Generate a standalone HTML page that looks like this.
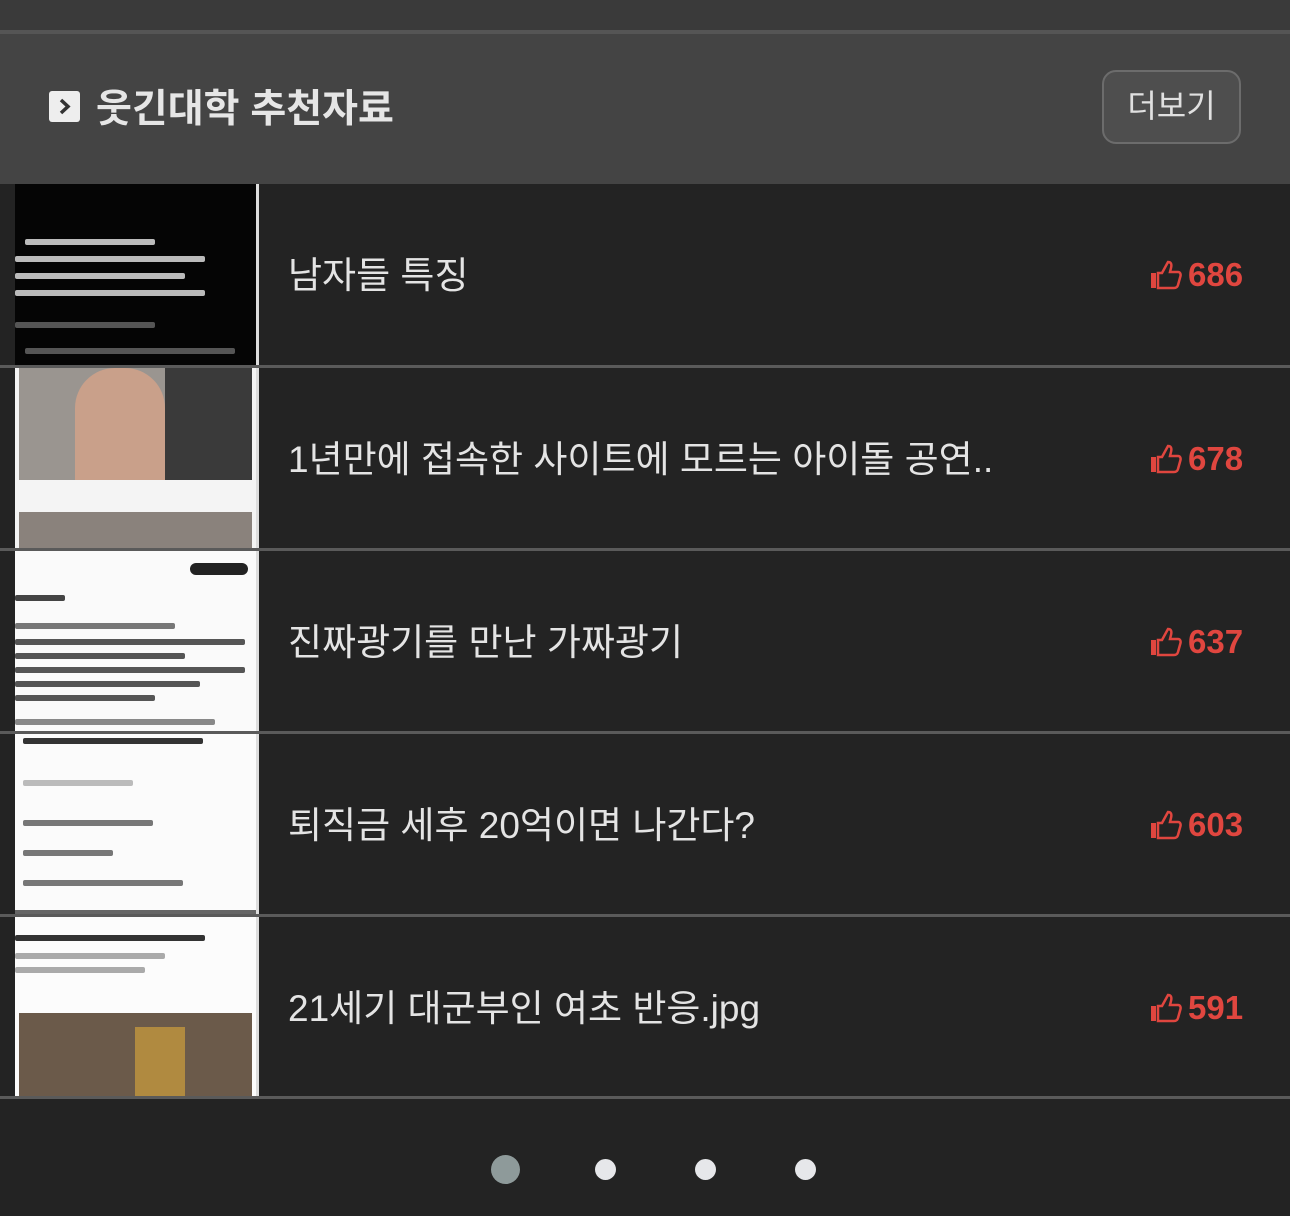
<!DOCTYPE html>
<html><head><meta charset="utf-8"><style>
*{margin:0;padding:0;box-sizing:border-box}
body{width:1290px;height:1216px;background:#232323;font-family:"Liberation Sans","Noto Sans CJK KR",sans-serif;position:relative;overflow:hidden}
.top{position:absolute;left:0;top:0;width:1290px;height:30px;background:#3a3a3a}
.tl{position:absolute;left:0;top:30px;width:1290px;height:4px;background:#555}
.hdr{position:absolute;left:0;top:34px;width:1290px;height:150px;background:#444}
.hdr .ic{position:absolute;left:49px;top:57px;width:31px;height:31px;background:#eee;border-radius:3px}
.hdr h1{position:absolute;left:96px;top:44px;font-size:39px;font-weight:bold;color:#e6e6e6;white-space:nowrap}
.btn{position:absolute;left:1102px;top:36px;width:139px;height:74px;border:2px solid #6c6c6c;border-radius:14px;background:#4e4e4e;color:#e0e0e0;font-size:32px;text-align:center;line-height:68px}
.row{position:absolute;left:0;width:1290px;height:181px;background:#232323}
.sep{position:absolute;left:0;width:1290px;height:3px;background:#5a5a5a}
.th{position:absolute;left:15px;top:0;width:241px;height:181px;overflow:hidden}
.edge{position:absolute;left:256px;top:0;width:3px;height:181px;background:#ddd}
.t{position:absolute;left:288px;top:61px;font-size:37px;color:#e4e4e4;white-space:nowrap}
.v{position:absolute;left:1150px;top:72px;font-size:33px;font-weight:bold;color:#e0463f}
.v svg{vertical-align:-4px;margin-right:6px}
.dot{position:absolute;border-radius:50%}
.ln{position:absolute;height:6px;background:#888;border-radius:2px}
</style></head><body>
<div class="top"></div><div class="tl"></div>
<div class="hdr">
<div class="ic"><svg width="31" height="31" viewBox="0 0 31 31"><path d="M12 9l7 6.5-7 6.5" stroke="#333" stroke-width="3.5" fill="none"/></svg></div>
<h1>웃긴대학 추천자료</h1>
<div class="btn">더보기</div>
</div>

<div class="row" style="top:184px"><div class="th" style="background:#050505">
<div class="ln" style="left:10px;top:55px;width:130px;background:#bbb"></div>
<div class="ln" style="left:0;top:72px;width:190px;background:#bbb"></div>
<div class="ln" style="left:0;top:89px;width:170px;background:#bbb"></div>
<div class="ln" style="left:0;top:106px;width:190px;background:#bbb"></div>
<div class="ln" style="left:0;top:138px;width:140px;background:#555"></div>
<div class="ln" style="left:10px;top:164px;width:210px;background:#555"></div>
</div><div class="edge"></div><div class="t">남자들 특징</div><div class="v"><svg width="32" height="30" viewBox="0 0 32 30"><rect x="1" y="13" width="5" height="15" fill="#e0463f"/><path d="M8 13h4l6-11c3 0 4 2 3 6l-1 4h8c2 0 3 2 2.5 4l-2.5 9c-.5 2-2 3-4 3H8z" fill="none" stroke="#e0463f" stroke-width="2.5"/></svg>686</div></div>
<div class="sep" style="top:365px"></div>

<div class="row" style="top:368px"><div class="th" style="background:#f4f4f4">
<div style="position:absolute;left:4px;top:0;width:233px;height:112px;background:#9a9590"></div>
<div style="position:absolute;left:60px;top:0;width:90px;height:112px;background:#c9a08a;border-radius:40px 40px 0 0"></div>
<div style="position:absolute;left:150px;top:0;width:87px;height:112px;background:#3a3a3a"></div>
<div style="position:absolute;left:4px;top:144px;width:233px;height:40px;background:#8a827c"></div>
</div><div class="edge"></div><div class="t">1년만에 접속한 사이트에 모르는 아이돌 공연..</div><div class="v"><svg width="32" height="30" viewBox="0 0 32 30"><rect x="1" y="13" width="5" height="15" fill="#e0463f"/><path d="M8 13h4l6-11c3 0 4 2 3 6l-1 4h8c2 0 3 2 2.5 4l-2.5 9c-.5 2-2 3-4 3H8z" fill="none" stroke="#e0463f" stroke-width="2.5"/></svg>678</div></div>
<div class="sep" style="top:548px"></div>

<div class="row" style="top:551px"><div class="th" style="background:#fafafa">
<div class="ln" style="left:175px;top:12px;width:58px;height:12px;background:#222;border-radius:6px"></div>
<div class="ln" style="left:0;top:44px;width:50px;background:#444"></div>
<div class="ln" style="left:0;top:72px;width:160px;background:#777"></div>
<div class="ln" style="left:0;top:88px;width:230px;background:#555"></div>
<div class="ln" style="left:0;top:102px;width:170px;background:#555"></div>
<div class="ln" style="left:0;top:116px;width:230px;background:#555"></div>
<div class="ln" style="left:0;top:130px;width:185px;background:#555"></div>
<div class="ln" style="left:0;top:144px;width:140px;background:#555"></div>
<div class="ln" style="left:0;top:168px;width:200px;background:#888"></div>
</div><div class="edge"></div><div class="t">진짜광기를 만난 가짜광기</div><div class="v"><svg width="32" height="30" viewBox="0 0 32 30"><rect x="1" y="13" width="5" height="15" fill="#e0463f"/><path d="M8 13h4l6-11c3 0 4 2 3 6l-1 4h8c2 0 3 2 2.5 4l-2.5 9c-.5 2-2 3-4 3H8z" fill="none" stroke="#e0463f" stroke-width="2.5"/></svg>637</div></div>
<div class="sep" style="top:731px"></div>

<div class="row" style="top:734px"><div class="th" style="background:#fbfbfb">
<div class="ln" style="left:8px;top:4px;width:180px;background:#333"></div>
<div class="ln" style="left:8px;top:46px;width:110px;background:#bbb"></div>
<div class="ln" style="left:8px;top:86px;width:130px;background:#777"></div>
<div class="ln" style="left:8px;top:116px;width:90px;background:#777"></div>
<div class="ln" style="left:8px;top:146px;width:160px;background:#777"></div>
<div style="position:absolute;left:0;top:176px;width:241px;height:5px;background:#666"></div>
</div><div class="edge"></div><div class="t">퇴직금 세후 20억이면 나간다?</div><div class="v"><svg width="32" height="30" viewBox="0 0 32 30"><rect x="1" y="13" width="5" height="15" fill="#e0463f"/><path d="M8 13h4l6-11c3 0 4 2 3 6l-1 4h8c2 0 3 2 2.5 4l-2.5 9c-.5 2-2 3-4 3H8z" fill="none" stroke="#e0463f" stroke-width="2.5"/></svg>603</div></div>
<div class="sep" style="top:914px"></div>

<div class="row" style="top:917px"><div class="th" style="background:#fcfcfc">
<div class="ln" style="left:0;top:18px;width:190px;background:#333"></div>
<div class="ln" style="left:0;top:36px;width:150px;background:#aaa"></div>
<div class="ln" style="left:0;top:50px;width:130px;background:#aaa"></div>
<div style="position:absolute;left:4px;top:96px;width:233px;height:85px;background:#6b5a4a"></div>
<div style="position:absolute;left:120px;top:110px;width:50px;height:71px;background:#b08a40"></div>
</div><div class="edge"></div><div class="t">21세기 대군부인 여초 반응.jpg</div><div class="v"><svg width="32" height="30" viewBox="0 0 32 30"><rect x="1" y="13" width="5" height="15" fill="#e0463f"/><path d="M8 13h4l6-11c3 0 4 2 3 6l-1 4h8c2 0 3 2 2.5 4l-2.5 9c-.5 2-2 3-4 3H8z" fill="none" stroke="#e0463f" stroke-width="2.5"/></svg>591</div></div>
<div class="sep" style="top:1096px"></div>

<div class="dot" style="left:491px;top:1155px;width:29px;height:29px;background:#8e9a9a"></div>
<div class="dot" style="left:595px;top:1159px;width:21px;height:21px;background:#e6e7ea"></div>
<div class="dot" style="left:695px;top:1159px;width:21px;height:21px;background:#e6e7ea"></div>
<div class="dot" style="left:795px;top:1159px;width:21px;height:21px;background:#e6e7ea"></div>
</body></html>
